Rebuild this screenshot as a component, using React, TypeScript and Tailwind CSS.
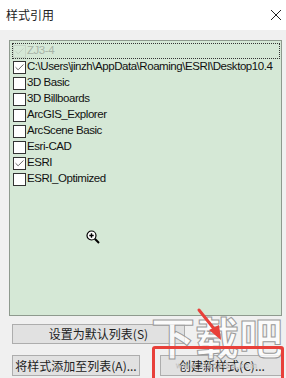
import { Check } from 'lucide-react';

const rows = [
  { label: 'ZJ3-4', checked: true, disabled: true },
  { label: 'C:\\Users\\jinzh\\AppData\\Roaming\\ESRI\\Desktop10.4', checked: true },
  { label: '3D Basic' },
  { label: '3D Billboards' },
  { label: 'ArcGIS_Explorer' },
  { label: 'ArcScene Basic' },
  { label: 'Esri-CAD' },
  { label: 'ESRI', checked: true },
  { label: 'ESRI_Optimized' },
];

function Box({ checked, disabled }: { checked?: boolean; disabled?: boolean }) {
  return (
    <span
      className={`w-[13px] h-[13px] shrink-0 flex items-center justify-center border ${
        disabled ? 'border-[#c8d6c8]' : 'border-[#333] bg-white'
      }`}
    >
      {checked && (
        <Check className={`w-[11px] h-[11px] ${disabled ? 'text-[#b8c4b8]' : 'text-[#333]'}`} strokeWidth={1.6} />
      )}
    </span>
  );
}

export default function App() {
  return (
    <div className="w-[286px] h-[378px] bg-[#f0f0f0] overflow-hidden relative font-['Liberation_Sans','Noto_Sans_CJK_SC',sans-serif] text-[12px] text-black">
      <div className="h-[30px] bg-white flex items-center justify-between pl-[6px] pr-[4px]">
        <span className="font-['Noto_Sans_CJK_SC',sans-serif] text-[12px] text-[#222]">样式引用</span>
        <svg width="12" height="12" viewBox="0 0 12 12" className="text-[#222]">
          <path d="M1 1L11 11M11 1L1 11" stroke="currentColor" strokeWidth="1" />
        </svg>
      </div>

      <div className="mt-[10px] ml-[9px] mr-[4px] h-[276px] border border-[#8e9a8e] bg-[#d5e8d6] pt-[2px] pl-[2px] relative">
        {rows.map((r, i) => (
          <div
            key={i}
            className={`h-[16px] flex items-center gap-[1px] pl-[1px] whitespace-nowrap overflow-hidden ${
              i === 0 ? 'outline outline-1 outline-dotted outline-[#333] -outline-offset-1 mr-[1px]' : ''
            }`}
          >
            <Box checked={r.checked} disabled={r.disabled} />
            <span className={`leading-none text-[11.5px] tracking-[-0.45px] ${r.disabled ? 'text-[#a8b4a8]' : 'text-[#111]'}`}>{r.label}</span>
          </div>
        ))}
        <svg width="14" height="14" viewBox="0 0 14 14" className="absolute left-[76px] top-[189px]">
          <circle cx="5.5" cy="5.5" r="4.5" fill="white" stroke="black" strokeWidth="1.2" />
          <path d="M3.3 5.5H7.7M5.5 3.3V7.7" stroke="black" strokeWidth="1.4" />
          <path d="M8.8 8.8L13 13" stroke="black" strokeWidth="2" />
        </svg>
      </div>

      <div className="ml-[12px] mt-[8px] w-[173px] h-[20px] bg-[#e1e1e1] border border-[#adadad] flex items-center justify-center font-['Noto_Sans_CJK_SC',sans-serif] text-[12px] text-[#222]">
        设置为默认列表(S)
      </div>

      <div className="flex items-start mt-[11px] pl-[12px] gap-[20px]">
        <div className="w-[128px] h-[21px] bg-[#e1e1e1] border border-[#adadad] flex items-center justify-center font-['Noto_Sans_CJK_SC',sans-serif] text-[12px] text-[#222] whitespace-nowrap">
          将样式添加至列表(A)...
        </div>
        <div className="w-[124px] h-[21px] bg-[#e1e1e1] border border-[#adadad] flex items-center justify-center font-['Noto_Sans_CJK_SC',sans-serif] text-[12px] text-[#222] whitespace-nowrap">
          创建新样式(C)...
        </div>
      </div>

      <div className="absolute left-[148px] top-[314px] w-[138px] flex flex-col items-center pointer-events-none">
        <div className="text-[44px] leading-none font-['Noto_Sans_CJK_SC',sans-serif] font-bold text-white/75 [-webkit-text-stroke:1px_#9a9a9a]">
          下载吧
        </div>
        <div className="text-[8px] leading-none text-white/70 [-webkit-text-stroke:0.3px_#aaa] mt-[4px] tracking-[1px]">
          www.xiazaiba.com
        </div>
      </div>

      <div className="absolute left-[152px] top-[346px] w-[132px] h-[40px] border-[3px] border-[#e8403a] rounded-[3px]" />
      <svg width="40" height="40" viewBox="0 0 40 40" className="absolute left-[194px] top-[306px]">
        <path d="M5 4L21 24" stroke="#e8403a" strokeWidth="3" strokeLinecap="round" />
        <path d="M15 24L27 34L25 19Z" fill="#e8403a" />
      </svg>
    </div>
  );
}
